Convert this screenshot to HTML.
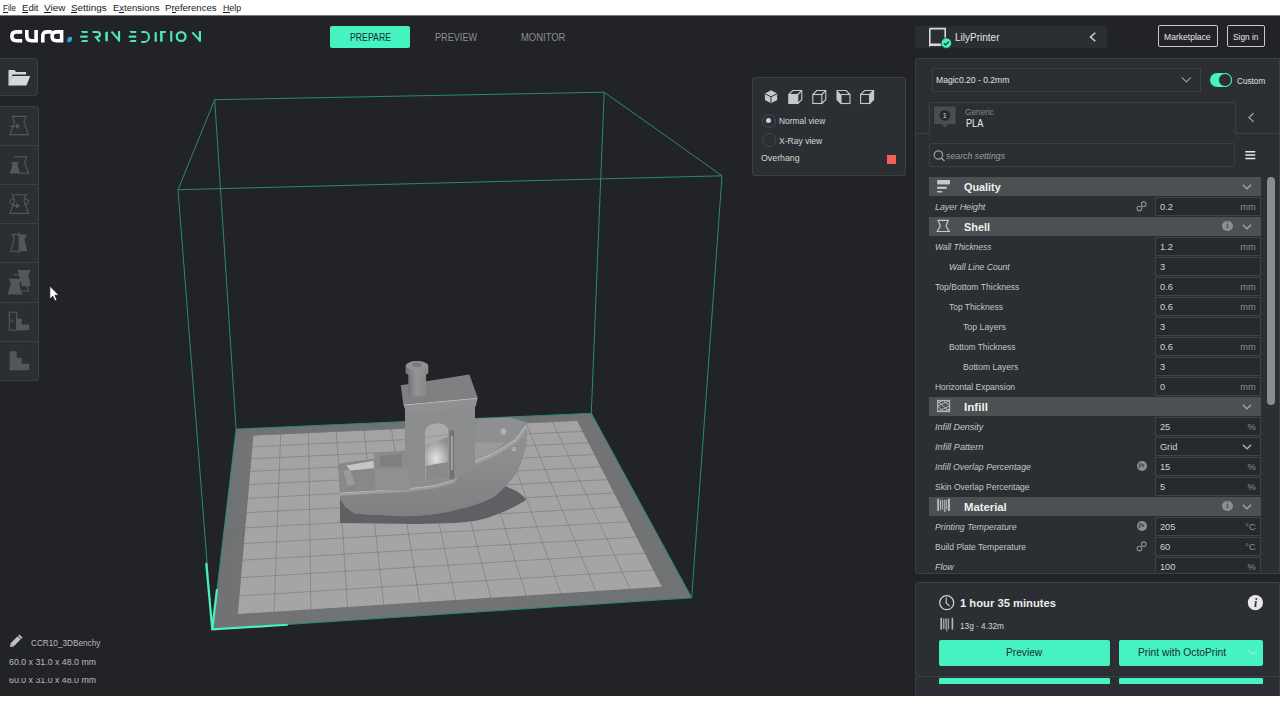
<!DOCTYPE html>
<html><head><meta charset="utf-8"><style>
html,body{margin:0;padding:0;width:1280px;height:720px;overflow:hidden;background:#222327;}
body{position:relative;font-family:"Liberation Sans",sans-serif;}
.t{position:absolute;white-space:pre;transform-origin:0 0;}
.r{position:absolute;}
</style></head><body>
<div class="r" style="left:0px;top:0px;width:1280px;height:15px;background:#ffffff;"></div>
<div class="t" style="left:2.50px;top:2px;font-size:9.60px;line-height:11px;color:#1a1a1a;transform:scaleX(0.8404);">File</div>
<div class="t" style="left:21.50px;top:2px;font-size:9.60px;line-height:11px;color:#1a1a1a;transform:scaleX(0.9974);">Edit</div>
<div class="t" style="left:44.00px;top:2px;font-size:9.60px;line-height:11px;color:#1a1a1a;transform:scaleX(1.0419);">View</div>
<div class="t" style="left:71.20px;top:2px;font-size:9.60px;line-height:11px;color:#1a1a1a;transform:scaleX(1.0320);">Settings</div>
<div class="t" style="left:112.70px;top:2px;font-size:9.60px;line-height:11px;color:#1a1a1a;transform:scaleX(0.9902);">Extensions</div>
<div class="t" style="left:165.00px;top:2px;font-size:9.60px;line-height:11px;color:#1a1a1a;transform:scaleX(0.9969);">Preferences</div>
<div class="t" style="left:222.50px;top:2px;font-size:9.60px;line-height:11px;color:#1a1a1a;transform:scaleX(0.9167);">Help</div>
<div class="r" style="left:2.5px;top:12px;width:5.5px;height:1px;background:#1a1a1a;"></div>
<div class="r" style="left:21.5px;top:12px;width:6.5px;height:1px;background:#1a1a1a;"></div>
<div class="r" style="left:44px;top:12px;width:7px;height:1px;background:#1a1a1a;"></div>
<div class="r" style="left:71.2px;top:12px;width:6.299999999999997px;height:1px;background:#1a1a1a;"></div>
<div class="r" style="left:119px;top:12px;width:5px;height:1px;background:#1a1a1a;"></div>
<div class="r" style="left:171.5px;top:12px;width:4.0px;height:1px;background:#1a1a1a;"></div>
<div class="r" style="left:222.5px;top:12px;width:7.0px;height:1px;background:#1a1a1a;"></div>
<div class="r" style="left:0px;top:15px;width:1280px;height:681px;background:#222327;"></div>
<div class="r" style="left:0px;top:15px;width:1280px;height:1px;background:#77787a;"></div>
<svg class="r" style="left:0;top:0" width="1280" height="720" viewBox="0 0 1280 720">
<polygon points="236.10,429.10 591.30,413.30 691.70,597.80 212.25,629.40" fill="#707173"/>
<polygon points="253.36,435.49 577.12,420.84 661.77,586.72 237.89,614.03" fill="#a8a8a9"/>
<path d="M250.42,428.46 L231.84,628.11 M235.41,434.86 L594.23,418.68 M253.21,428.34 L235.65,627.86 M235.28,435.99 L594.80,419.74 M255.99,428.22 L239.45,627.61 M235.14,437.13 L595.38,420.80 M258.77,428.09 L243.25,627.36 M235.01,438.28 L595.96,421.87 M261.54,427.97 L247.04,627.11 M234.87,439.43 L596.54,422.94 M264.32,427.84 L250.83,626.86 M234.73,440.58 L597.13,424.01 M267.09,427.72 L254.62,626.61 M234.60,441.74 L597.72,425.09 M269.87,427.60 L258.41,626.36 M234.46,442.90 L598.31,426.18 M272.64,427.47 L262.19,626.11 M234.32,444.07 L598.90,427.27 M275.41,427.35 L265.97,625.86 M234.18,445.24 L599.50,428.36 M278.18,427.23 L269.74,625.61 M234.04,446.42 L600.09,429.46 M280.94,427.11 L273.52,625.36 M233.90,447.60 L600.69,430.56 M283.71,426.98 L277.29,625.11 M233.76,448.79 L601.29,431.67 M286.47,426.86 L281.05,624.87 M233.61,449.98 L601.90,432.78 M289.23,426.74 L284.82,624.62 M233.47,451.18 L602.51,433.89 M291.99,426.61 L288.58,624.37 M233.33,452.39 L603.12,435.01 M294.75,426.49 L292.34,624.12 M233.18,453.59 L603.73,436.14 M297.50,426.37 L296.09,623.87 M233.04,454.81 L604.34,437.27 M300.26,426.25 L299.84,623.63 M232.89,456.02 L604.96,438.40 M303.01,426.12 L303.59,623.38 M232.75,457.25 L605.58,439.54 M305.76,426.00 L307.34,623.13 M232.60,458.48 L606.20,440.68 M308.51,425.88 L311.08,622.89 M232.46,459.71 L606.82,441.83 M311.26,425.76 L314.82,622.64 M232.31,460.95 L607.45,442.98 M314.01,425.63 L318.55,622.39 M232.16,462.19 L608.08,444.14 M316.75,425.51 L322.29,622.15 M232.01,463.44 L608.71,445.30 M319.49,425.39 L326.02,621.90 M231.86,464.70 L609.35,446.47 M322.24,425.27 L329.74,621.66 M231.71,465.96 L609.99,447.64 M324.98,425.15 L333.47,621.41 M231.56,467.23 L610.63,448.81 M327.71,425.02 L337.19,621.17 M231.41,468.50 L611.27,450.00 M330.45,424.90 L340.91,620.92 M231.26,469.77 L611.91,451.18 M333.19,424.78 L344.62,620.68 M231.10,471.06 L612.56,452.37 M335.92,424.66 L348.34,620.43 M230.95,472.34 L613.21,453.57 M338.65,424.54 L352.04,620.19 M230.80,473.64 L613.87,454.77 M341.38,424.42 L355.75,619.94 M230.64,474.94 L614.52,455.98 M344.11,424.30 L359.45,619.70 M230.49,476.24 L615.18,457.19 M346.84,424.17 L363.15,619.45 M230.33,477.55 L615.84,458.40 M349.56,424.05 L366.85,619.21 M230.17,478.87 L616.51,459.63 M352.28,423.93 L370.55,618.97 M230.02,480.19 L617.18,460.85 M355.01,423.81 L374.24,618.72 M229.86,481.52 L617.85,462.08 M357.73,423.69 L377.92,618.48 M229.70,482.86 L618.52,463.32 M360.45,423.57 L381.61,618.24 M229.54,484.20 L619.20,464.56 M363.16,423.45 L385.29,617.99 M229.38,485.54 L619.87,465.81 M365.88,423.33 L388.97,617.75 M229.22,486.89 L620.56,467.06 M368.59,423.21 L392.65,617.51 M229.06,488.25 L621.24,468.32 M371.30,423.09 L396.32,617.27 M228.89,489.62 L621.93,469.59 M374.01,422.97 L399.99,617.03 M228.73,490.99 L622.62,470.85 M376.72,422.84 L403.66,616.78 M228.57,492.36 L623.31,472.13 M379.43,422.72 L407.32,616.54 M228.40,493.75 L624.01,473.41 M382.14,422.60 L410.99,616.30 M228.24,495.14 L624.71,474.70 M384.84,422.48 L414.64,616.06 M228.07,496.53 L625.41,475.99 M387.54,422.36 L418.30,615.82 M227.90,497.93 L626.12,477.28 M390.24,422.24 L421.95,615.58 M227.74,499.34 L626.83,478.59 M392.94,422.12 L425.60,615.34 M227.57,500.76 L627.54,479.90 M395.64,422.00 L429.25,615.10 M227.40,502.18 L628.25,481.21 M398.34,421.88 L432.89,614.86 M227.23,503.61 L628.97,482.53 M401.03,421.76 L436.53,614.62 M227.06,505.04 L629.69,483.85 M403.73,421.64 L440.17,614.38 M226.89,506.48 L630.42,485.19 M406.42,421.52 L443.81,614.14 M226.71,507.93 L631.15,486.52 M409.11,421.40 L447.44,613.90 M226.54,509.38 L631.88,487.87 M411.80,421.28 L451.07,613.66 M226.37,510.84 L632.61,489.22 M414.48,421.17 L454.70,613.42 M226.19,512.31 L633.35,490.57 M417.17,421.05 L458.32,613.18 M226.02,513.79 L634.09,491.93 M419.85,420.93 L461.94,612.94 M225.84,515.27 L634.83,493.30 M422.53,420.81 L465.56,612.70 M225.66,516.76 L635.58,494.67 M425.21,420.69 L469.17,612.47 M225.48,518.25 L636.33,496.05 M427.89,420.57 L472.78,612.23 M225.31,519.76 L637.09,497.44 M430.57,420.45 L476.39,611.99 M225.13,521.27 L637.84,498.83 M433.24,420.33 L480.00,611.75 M224.95,522.78 L638.61,500.23 M435.92,420.21 L483.60,611.52 M224.76,524.31 L639.37,501.64 M438.59,420.09 L487.20,611.28 M224.58,525.84 L640.14,503.05 M441.26,419.97 L490.80,611.04 M224.40,527.38 L640.91,504.46 M443.93,419.86 L494.40,610.80 M224.21,528.92 L641.68,505.89 M446.60,419.74 L497.99,610.57 M224.03,530.48 L642.46,507.32 M449.26,419.62 L501.58,610.33 M223.84,532.04 L643.25,508.76 M451.93,419.50 L505.16,610.09 M223.66,533.61 L644.03,510.20 M454.59,419.38 L508.75,609.86 M223.47,535.18 L644.82,511.65 M457.25,419.26 L512.33,609.62 M223.28,536.76 L645.61,513.11 M459.91,419.14 L515.90,609.39 M223.09,538.36 L646.41,514.57 M462.57,419.03 L519.48,609.15 M222.90,539.95 L647.21,516.04 M465.23,418.91 L523.05,608.92 M222.71,541.56 L648.01,517.52 M467.88,418.79 L526.62,608.68 M222.52,543.18 L648.82,519.01 M470.54,418.67 L530.19,608.45 M222.32,544.80 L649.63,520.50 M473.19,418.55 L533.75,608.21 M222.13,546.43 L650.45,522.00 M475.84,418.44 L537.31,607.98 M221.93,548.07 L651.27,523.50 M478.49,418.32 L540.87,607.74 M221.74,549.71 L652.09,525.01 M481.14,418.20 L544.42,607.51 M221.54,551.37 L652.92,526.53 M483.78,418.08 L547.97,607.27 M221.34,553.03 L653.75,528.06 M486.43,417.96 L551.52,607.04 M221.14,554.70 L654.58,529.59 M489.07,417.85 L555.07,606.81 M220.94,556.38 L655.42,531.13 M491.71,417.73 L558.61,606.57 M220.74,558.07 L656.27,532.68 M494.35,417.61 L562.16,606.34 M220.54,559.77 L657.11,534.24 M496.99,417.50 L565.69,606.10 M220.34,561.47 L657.96,535.80 M499.63,417.38 L569.23,605.87 M220.13,563.19 L658.82,537.37 M502.26,417.26 L572.76,605.64 M219.93,564.91 L659.68,538.95 M504.89,417.14 L576.29,605.41 M219.72,566.64 L660.54,540.54 M507.53,417.03 L579.82,605.17 M219.52,568.38 L661.41,542.13 M510.16,416.91 L583.34,604.94 M219.31,570.13 L662.28,543.73 M512.79,416.79 L586.86,604.71 M219.10,571.88 L663.15,545.34 M515.41,416.68 L590.38,604.48 M218.89,573.65 L664.03,546.96 M518.04,416.56 L593.90,604.25 M218.68,575.43 L664.92,548.59 M520.66,416.44 L597.41,604.01 M218.46,577.21 L665.81,550.22 M523.29,416.33 L600.92,603.78 M218.25,579.00 L666.70,551.86 M525.91,416.21 L604.43,603.55 M218.04,580.81 L667.60,553.51 M528.53,416.09 L607.93,603.32 M217.82,582.62 L668.50,555.17 M531.14,415.98 L611.43,603.09 M217.60,584.44 L669.41,556.83 M533.76,415.86 L614.93,602.86 M217.39,586.27 L670.32,558.51 M536.38,415.74 L618.43,602.63 M217.17,588.11 L671.23,560.19 M538.99,415.63 L621.92,602.40 M216.95,589.96 L672.15,561.88 M541.60,415.51 L625.42,602.17 M216.72,591.82 L673.08,563.58 M544.21,415.39 L628.90,601.94 M216.50,593.69 L674.01,565.28 M546.82,415.28 L632.39,601.71 M216.28,595.57 L674.94,567.00 M549.43,415.16 L635.87,601.48 M216.05,597.46 L675.88,568.72 M552.04,415.05 L639.35,601.25 M215.83,599.36 L676.82,570.46 M554.64,414.93 L642.83,601.02 M215.60,601.27 L677.77,572.20 M557.24,414.81 L646.30,600.79 M215.37,603.19 L678.72,573.95 M559.84,414.70 L649.78,600.56 M215.14,605.12 L679.68,575.71 M562.44,414.58 L653.24,600.33 M214.91,607.06 L680.64,577.48 M565.04,414.47 L656.71,600.11 M214.68,609.01 L681.61,579.25 M567.64,414.35 L660.18,599.88 M214.44,610.98 L682.58,581.04 M570.24,414.24 L663.64,599.65 M214.21,612.95 L683.56,582.84 M572.83,414.12 L667.09,599.42 M213.97,614.93 L684.54,584.64 M575.42,414.01 L670.55,599.19 M213.74,616.92 L685.53,586.46 M578.01,413.89 L674.00,598.97 M213.50,618.93 L686.52,588.28 M580.60,413.78 L677.45,598.74 M213.26,620.94 L687.52,590.11 M583.19,413.66 L680.90,598.51 M213.02,622.97 L688.52,591.96 M585.78,413.55 L684.35,598.28 M212.77,625.01 L689.53,593.81 M588.36,413.43 L687.79,598.06 M212.53,627.06 L690.54,595.67 M590.94,413.32 L691.23,597.83 M212.28,629.12 L691.56,597.54" stroke="#909090" stroke-opacity="0.18" stroke-width="0.6" fill="none"/>
<path d="M253.21,428.34 L235.65,627.86 M235.28,435.99 L594.80,419.74 M280.94,427.11 L273.52,625.36 M233.90,447.60 L600.69,430.56 M308.51,425.88 L311.08,622.89 M232.46,459.71 L606.82,441.83 M335.92,424.66 L348.34,620.43 M230.95,472.34 L613.21,453.57 M363.16,423.45 L385.29,617.99 M229.38,485.54 L619.87,465.81 M390.24,422.24 L421.95,615.58 M227.74,499.34 L626.83,478.59 M417.17,421.05 L458.32,613.18 M226.02,513.79 L634.09,491.93 M443.93,419.86 L494.40,610.80 M224.21,528.92 L641.68,505.89 M470.54,418.67 L530.19,608.45 M222.32,544.80 L649.63,520.50 M496.99,417.50 L565.69,606.10 M220.34,561.47 L657.96,535.80 M523.29,416.33 L600.92,603.78 M218.25,579.00 L666.70,551.86 M549.43,415.16 L635.87,601.48 M216.05,597.46 L675.88,568.72 M575.42,414.01 L670.55,599.19 M213.74,616.92 L685.53,586.46" stroke="#737477" stroke-opacity="0.6" stroke-width="0.9" fill="none"/>
<path d="M214.7,99.7 L604.2,92.2 M604.2,92.2 L722,175.8 M722,175.8 L178,189.7 M178,189.7 L214.7,99.7 M214.7,99.7 L236.1,429.1 M604.2,92.2 L591.3,413.3 M722,175.8 L691.7,597.8 M178,189.7 L212.25,629.4 M236.1,429.1 L591.3,413.3 M591.3,413.3 L691.7,597.8 M691.7,597.8 L212.25,629.4 M212.25,629.4 L236.1,429.1" stroke="#2b8a70" stroke-width="1" fill="none"/>
<path d="M340,498 L340,523 L417.5,524 L455,523 C468,522 480,520.5 490,517 C505,512 518,505 526,500 C524,495 516,490 505,486 L492,484 Z" fill="#5f6063"/>
<defs>
<linearGradient id="hull" x1="0" y1="0" x2="0" y2="1"><stop offset="0" stop-color="#929394"/><stop offset="1" stop-color="#7f8081"/></linearGradient>
<linearGradient id="chim" x1="0" y1="0" x2="1" y2="0"><stop offset="0" stop-color="#727374"/><stop offset="0.45" stop-color="#939495"/><stop offset="1" stop-color="#888989"/></linearGradient>
<radialGradient id="win" cx="0.45" cy="0.75" r="0.7"><stop offset="0" stop-color="#e2e3e4"/><stop offset="1" stop-color="#909192"/></radialGradient>
</defs>
<path d="M338.8,463.8 L373.5,459 L405,452 L475,418.8 L510,417.5 L526.3,422.5 C527.5,432 527,440 526.3,445 C523,458 520,467 515,475 C506,486 500,492 492.5,497.5 C480,504 468,507 455,510 C440,514 420,516 405,516.3 L355,513.8 C346,508 340,502 340,495 Z" fill="#8a8b8c"/>
<path d="M475,418.8 L510,417.5 L526.3,422.5 L515,440 L492.5,453.8 L466.3,465 L475,460 Z" fill="#8e8f90"/>
<path d="M474,442.5 L505,442.5 L492.5,453.8 L466.3,465 L452.5,480 L440,482 L474,468 Z" fill="#999a9b"/>
<path d="M340,492.5 L405,488.8 L435,485 L452.5,480 C457,472 461,467 466.3,465 L492.5,453.8 L515,440 L526.3,425 C527.5,432 527,440 526.3,445 C523,458 520,467 515,475 C506,486 500,492 492.5,497.5 C480,504 468,507 455,510 C440,514 420,516 405,516.3 L355,513.8 C346,508 340,502 340,495 Z" fill="url(#hull)"/>
<path d="M340,494.3 L405,490.5 L435,486.8 L453.5,481.8 C458,473.5 462,468.5 467.3,466.8 L493.5,455.5 L516,441.8 L527,426.5" stroke="#9c9d9e" stroke-width="3" fill="none"/>
<path d="M340,492.8 L405,489 L435,485.3 L452.5,480.3 C457,472 461,467 466.3,465.3 L492.5,454 L515,440.3 L526.3,425" stroke="#b8b9ba" stroke-width="1.2" fill="none"/>
<circle cx="514" cy="449" r="3.2" fill="#a9aaab" stroke="#7b7c7d" stroke-width="0.8"/>
<ellipse cx="503.5" cy="431.5" rx="2.8" ry="3.3" fill="#b0b1b2"/>
<path d="M338.8,463.8 L373.5,459 L374,470 L376,490.5 L340,492.5 Z" fill="#87888a"/>
<path d="M346.5,465.5 L373.3,460.8 L374.2,468.3 L350,470.5 Z" fill="#c4c5c6"/>
<path d="M343.3,471 L350,469.5 L355,484 L348,486 Z" fill="#9a9b9c"/>
<path d="M374.2,453.2 L409.4,450 L409.4,468.6 L374.2,468.6 Z" fill="#8a8b8c"/>
<path d="M380,455.8 L401.7,454 L401.7,466.7 L380,466.7 Z" fill="#7e7f80"/>
<path d="M374.2,468.6 L409.4,468.6 L410,490 L375.5,490.3 Z" fill="#8f9091"/>
<path d="M405,407.5 L475,403.8 L475,467.5 L452.5,480 L435,485 L409.4,488 L409.4,450 L405,450 Z" fill="#8c8d8e"/>
<path d="M425,480 L425,431 C427,422 446,420 448.2,430 L448.2,478 Z" fill="#a9aaab"/>
<path d="M425,437.5 L448.2,434.5 M425,445.5 L448.2,442.5" stroke="#8f9092" stroke-width="0.7" fill="none"/>
<path d="M425.7,446.2 L446.9,437 L448.2,437 L448.2,462 L425.7,466 Z" fill="url(#win)"/>
<path d="M425.7,466 L448.2,462 L448.2,478 L425.7,480 Z" fill="#898a8b"/>
<path d="M449.6,430.4 L454.1,430.4 L454.1,479.2 L449.6,479.2 Z" fill="#727374"/>
<path d="M451.2,436 L452.6,436 L452.6,470 L451.2,470 Z" fill="#b5b6b7"/>
<path d="M400.75,385.3 L469.4,374.4 L477.8,397.8 L403.3,404.4 Z" fill="#7f8081"/>
<path d="M403.3,404.4 L477.8,397.8 L475.6,406.7 L406.7,413.9 Z" fill="#8f9091"/>
<path d="M404,405 L477,398.3" stroke="#b8b9ba" stroke-width="1" fill="none"/>
<path d="M408.3,370 L426.1,370 L426.1,394.5 C420,396.5 414,396.5 408.3,394.5 Z" fill="url(#chim)"/>
<path d="M405.6,365.5 L428.3,365.5 L428.3,373.5 C422,376.5 412,376.5 405.6,373.5 Z" fill="url(#chim)"/>
<ellipse cx="417" cy="365.6" rx="11.3" ry="4.5" fill="#909192"/>
<ellipse cx="417" cy="364.8" rx="5" ry="2.3" fill="#797a7b"/>
<path d="M206.3,563.8 L212.25,629.4 L286.9,624.75 M212.25,629.4 L216.9,590" stroke="#4af0c0" stroke-width="2.2" fill="none" stroke-linecap="round"/>
</svg>
<div class="r" style="left:330px;top:25.5px;width:80px;height:22.5px;background:#45f3c1;border-radius:2px;"></div>
<div class="t" style="left:350.00px;top:31px;font-size:10.50px;line-height:12px;color:#1d2b2f;transform:scaleX(0.8299);">PREPARE</div>
<div class="t" style="left:434.75px;top:31px;font-size:10.50px;line-height:12px;color:#8b8e92;transform:scaleX(0.8694);">PREVIEW</div>
<div class="t" style="left:520.60px;top:31px;font-size:10.50px;line-height:12px;color:#8b8e92;transform:scaleX(0.8990);">MONITOR</div>
<div class="r" style="left:915px;top:26px;width:192px;height:22px;background:#2b2f33;border-radius:3px;"></div>
<div class="t" style="left:955.30px;top:31px;font-size:10.50px;line-height:12px;color:#e6e6e6;transform:scaleX(0.9532);">LilyPrinter</div>
<div class="r" style="left:1158px;top:25px;width:60px;height:22px;border:1px solid #c8c8c8;box-sizing:border-box;border-radius:2px;"></div>
<div class="t" style="left:1164.20px;top:32px;font-size:9.20px;line-height:10px;color:#e6e6e6;transform:scaleX(0.9319);">Marketplace</div>
<div class="r" style="left:1227px;top:25px;width:38px;height:22px;border:1px solid #c8c8c8;box-sizing:border-box;border-radius:2px;"></div>
<div class="t" style="left:1232.80px;top:32px;font-size:9.20px;line-height:10px;color:#e6e6e6;transform:scaleX(0.9029);">Sign in</div>
<div class="r" style="left:915px;top:58px;width:365px;height:516px;background:#2b2e32;border:1px solid #3c3f43;box-sizing:border-box;border-radius:3px 0 0 3px;"></div>
<div class="r" style="left:932px;top:68px;width:269px;height:24px;background:#2b2e32;border:1px solid #3c3f43;box-sizing:border-box;border-radius:1px;"></div>
<div class="t" style="left:935.80px;top:75px;font-size:9.20px;line-height:10px;color:#e0e0e0;transform:scaleX(0.9334);">Magic0.20 - 0.2mm</div>
<div class="r" style="left:1210px;top:72.8px;width:22px;height:14.3px;background:#45f3c1;border-radius:7.15px;"></div>
<div class="r" style="left:1218.2px;top:72.9px;width:14px;height:14px;border-radius:50%;background:#2b2e32;box-sizing:border-box;border:1.1px solid #45f3c1"></div>
<div class="t" style="left:1236.70px;top:76px;font-size:9.20px;line-height:10px;color:#e0e0e0;transform:scaleX(0.8928);">Custom</div>
<div class="r" style="left:929px;top:102px;width:307px;height:32px;border:1px solid #3c3f43;border-bottom:none;box-sizing:border-box;border-radius:3px 3px 0 0"></div>
<div class="r" style="left:915px;top:133px;width:15px;height:1px;background:#3c3f43;"></div>
<div class="r" style="left:1235px;top:133px;width:45px;height:1px;background:#3c3f43;"></div>
<div class="t" style="left:965.00px;top:107px;font-size:8.50px;line-height:10px;color:#85888b;transform:scaleX(0.9744);">Generic</div>
<div class="t" style="left:965.50px;top:118px;font-size:10.20px;line-height:11px;color:#ececec;transform:scaleX(0.8973);">PLA</div>
<div class="r" style="left:929px;top:143px;width:306px;height:24px;background:#2b2e32;border:1px solid #3c3f43;box-sizing:border-box;border-radius:2px;"></div>
<div class="t" style="left:946.40px;top:150px;font-size:9.40px;line-height:11px;color:#9a9da0;transform:scaleX(0.9364);font-style:italic;">search settings</div>
<div class="r" style="left:915px;top:170px;width:364px;height:401.5px;overflow:hidden">
<div class="r" style="left:14px;top:7px;width:332px;height:19px;background:#4b5052;"></div>
<div class="t" style="left:49.00px;top:11px;font-size:10.80px;line-height:12px;color:#f0f0f0;transform:scaleX(1.0025);font-weight:bold;">Quality</div>
<svg class="r" style="left:327px;top:14px" width="10" height="6" viewBox="0 0 10 6"><path d="M0.8 0.8 L5 4.8 L9.2 0.8" fill="none" stroke="#a3a6a9" stroke-width="1.35"/></svg>
<div class="t" style="left:20.40px;top:32px;font-size:9.30px;line-height:10px;color:#c6c6c6;transform:scaleX(0.9539);font-style:italic;">Layer Height</div>
<div class="r" style="left:240px;top:27px;width:106px;height:19px;background:#26292d;border:1px solid #404347;box-sizing:border-box;border-radius:1px;"></div>
<div class="t" style="left:244.90px;top:32px;font-size:9.30px;line-height:10px;color:#d2d2d2;">0.2</div>
<div class="t" style="left:325.21px;top:32px;font-size:9.30px;line-height:10px;color:#8e9194;">mm</div>
<svg class="r" style="left:220px;top:31px" width="12" height="12" viewBox="0 0 12 12"><circle cx="4.4" cy="7.6" r="2.3" fill="none" stroke="#8c8c8c" stroke-width="1.1"/><circle cx="8.75" cy="3.2" r="2.3" fill="none" stroke="#8c8c8c" stroke-width="1.1"/></svg>
<div class="r" style="left:14px;top:47px;width:332px;height:19px;background:#4b5052;"></div>
<div class="t" style="left:49.00px;top:51px;font-size:10.80px;line-height:12px;color:#f0f0f0;transform:scaleX(1.0074);font-weight:bold;">Shell</div>
<svg class="r" style="left:327px;top:54px" width="10" height="6" viewBox="0 0 10 6"><path d="M0.8 0.8 L5 4.8 L9.2 0.8" fill="none" stroke="#a3a6a9" stroke-width="1.35"/></svg>
<div class="r" style="left:307.2px;top:51px;width:10.4px;height:10.4px;border-radius:50%;background:#8c8f92;color:#4b5052;font:bold 8px/10.4px 'Liberation Serif',serif;text-align:center">i</div>
<div class="t" style="left:20.40px;top:72px;font-size:9.30px;line-height:10px;color:#c6c6c6;transform:scaleX(0.9044);font-style:italic;">Wall Thickness</div>
<div class="r" style="left:240px;top:67px;width:106px;height:19px;background:#26292d;border:1px solid #404347;box-sizing:border-box;border-radius:1px;"></div>
<div class="t" style="left:244.90px;top:72px;font-size:9.30px;line-height:10px;color:#d2d2d2;">1.2</div>
<div class="t" style="left:325.21px;top:72px;font-size:9.30px;line-height:10px;color:#8e9194;">mm</div>
<div class="t" style="left:34.00px;top:92px;font-size:9.30px;line-height:10px;color:#c6c6c6;transform:scaleX(0.9270);font-style:italic;">Wall Line Count</div>
<div class="r" style="left:240px;top:87px;width:106px;height:19px;background:#26292d;border:1px solid #404347;box-sizing:border-box;border-radius:1px;"></div>
<div class="t" style="left:244.90px;top:92px;font-size:9.30px;line-height:10px;color:#d2d2d2;">3</div>
<div class="t" style="left:20.40px;top:112px;font-size:9.30px;line-height:10px;color:#c6c6c6;transform:scaleX(0.9242);">Top/Bottom Thickness</div>
<div class="r" style="left:240px;top:107px;width:106px;height:19px;background:#26292d;border:1px solid #404347;box-sizing:border-box;border-radius:1px;"></div>
<div class="t" style="left:244.90px;top:112px;font-size:9.30px;line-height:10px;color:#d2d2d2;">0.6</div>
<div class="t" style="left:325.21px;top:112px;font-size:9.30px;line-height:10px;color:#8e9194;">mm</div>
<div class="t" style="left:34.00px;top:132px;font-size:9.30px;line-height:10px;color:#c6c6c6;transform:scaleX(0.9110);">Top Thickness</div>
<div class="r" style="left:240px;top:127px;width:106px;height:19px;background:#26292d;border:1px solid #404347;box-sizing:border-box;border-radius:1px;"></div>
<div class="t" style="left:244.90px;top:132px;font-size:9.30px;line-height:10px;color:#d2d2d2;">0.6</div>
<div class="t" style="left:325.21px;top:132px;font-size:9.30px;line-height:10px;color:#8e9194;">mm</div>
<div class="t" style="left:47.60px;top:152px;font-size:9.30px;line-height:10px;color:#c6c6c6;transform:scaleX(0.9408);">Top Layers</div>
<div class="r" style="left:240px;top:147px;width:106px;height:19px;background:#26292d;border:1px solid #404347;box-sizing:border-box;border-radius:1px;"></div>
<div class="t" style="left:244.90px;top:152px;font-size:9.30px;line-height:10px;color:#d2d2d2;">3</div>
<div class="t" style="left:34.00px;top:172px;font-size:9.30px;line-height:10px;color:#c6c6c6;transform:scaleX(0.9018);">Bottom Thickness</div>
<div class="r" style="left:240px;top:167px;width:106px;height:19px;background:#26292d;border:1px solid #404347;box-sizing:border-box;border-radius:1px;"></div>
<div class="t" style="left:244.90px;top:172px;font-size:9.30px;line-height:10px;color:#d2d2d2;">0.6</div>
<div class="t" style="left:325.21px;top:172px;font-size:9.30px;line-height:10px;color:#8e9194;">mm</div>
<div class="t" style="left:47.60px;top:192px;font-size:9.30px;line-height:10px;color:#c6c6c6;transform:scaleX(0.9206);">Bottom Layers</div>
<div class="r" style="left:240px;top:187px;width:106px;height:19px;background:#26292d;border:1px solid #404347;box-sizing:border-box;border-radius:1px;"></div>
<div class="t" style="left:244.90px;top:192px;font-size:9.30px;line-height:10px;color:#d2d2d2;">3</div>
<div class="t" style="left:20.40px;top:212px;font-size:9.30px;line-height:10px;color:#c6c6c6;transform:scaleX(0.9114);">Horizontal Expansion</div>
<div class="r" style="left:240px;top:207px;width:106px;height:19px;background:#26292d;border:1px solid #404347;box-sizing:border-box;border-radius:1px;"></div>
<div class="t" style="left:244.90px;top:212px;font-size:9.30px;line-height:10px;color:#d2d2d2;">0</div>
<div class="t" style="left:325.21px;top:212px;font-size:9.30px;line-height:10px;color:#8e9194;">mm</div>
<div class="r" style="left:14px;top:227px;width:332px;height:19px;background:#4b5052;"></div>
<div class="t" style="left:49.00px;top:231px;font-size:10.80px;line-height:12px;color:#f0f0f0;transform:scaleX(1.0813);font-weight:bold;">Infill</div>
<svg class="r" style="left:327px;top:234px" width="10" height="6" viewBox="0 0 10 6"><path d="M0.8 0.8 L5 4.8 L9.2 0.8" fill="none" stroke="#a3a6a9" stroke-width="1.35"/></svg>
<div class="t" style="left:20.40px;top:252px;font-size:9.30px;line-height:10px;color:#c6c6c6;transform:scaleX(0.9634);font-style:italic;">Infill Density</div>
<div class="r" style="left:240px;top:247px;width:106px;height:19px;background:#26292d;border:1px solid #404347;box-sizing:border-box;border-radius:1px;"></div>
<div class="t" style="left:244.90px;top:252px;font-size:9.30px;line-height:10px;color:#d2d2d2;">25</div>
<div class="t" style="left:332.43px;top:252px;font-size:9.30px;line-height:10px;color:#8e9194;">%</div>
<div class="t" style="left:20.40px;top:272px;font-size:9.30px;line-height:10px;color:#c6c6c6;transform:scaleX(0.9836);font-style:italic;">Infill Pattern</div>
<div class="r" style="left:240px;top:267px;width:106px;height:19px;background:#26292d;border:1px solid #404347;box-sizing:border-box;border-radius:1px;"></div>
<div class="t" style="left:244.90px;top:272px;font-size:9.30px;line-height:10px;color:#d2d2d2;">Grid</div>
<svg class="r" style="left:327px;top:274px" width="10" height="6" viewBox="0 0 10 6"><path d="M0.8 0.8 L5 4.8 L9.2 0.8" fill="none" stroke="#b0b3b6" stroke-width="1.35"/></svg>
<div class="t" style="left:20.40px;top:292px;font-size:9.30px;line-height:10px;color:#c6c6c6;transform:scaleX(0.9427);font-style:italic;">Infill Overlap Percentage</div>
<div class="r" style="left:240px;top:287px;width:106px;height:19px;background:#26292d;border:1px solid #404347;box-sizing:border-box;border-radius:1px;"></div>
<div class="t" style="left:244.90px;top:292px;font-size:9.30px;line-height:10px;color:#d2d2d2;">15</div>
<div class="t" style="left:332.43px;top:292px;font-size:9.30px;line-height:10px;color:#8e9194;">%</div>
<div class="r" style="left:221.8px;top:291.2px;width:9.8px;height:9.8px;border-radius:50%;background:#8c8c8c;color:#2b2e32;font:italic bold 7px/9.8px 'Liberation Serif',serif;text-align:center">fx</div>
<div class="t" style="left:20.40px;top:312px;font-size:9.30px;line-height:10px;color:#c6c6c6;transform:scaleX(0.9150);">Skin Overlap Percentage</div>
<div class="r" style="left:240px;top:307px;width:106px;height:19px;background:#26292d;border:1px solid #404347;box-sizing:border-box;border-radius:1px;"></div>
<div class="t" style="left:244.90px;top:312px;font-size:9.30px;line-height:10px;color:#d2d2d2;">5</div>
<div class="t" style="left:332.43px;top:312px;font-size:9.30px;line-height:10px;color:#8e9194;">%</div>
<div class="r" style="left:14px;top:327px;width:332px;height:19px;background:#4b5052;"></div>
<div class="t" style="left:49.00px;top:331px;font-size:10.80px;line-height:12px;color:#f0f0f0;transform:scaleX(1.0461);font-weight:bold;">Material</div>
<svg class="r" style="left:327px;top:334px" width="10" height="6" viewBox="0 0 10 6"><path d="M0.8 0.8 L5 4.8 L9.2 0.8" fill="none" stroke="#a3a6a9" stroke-width="1.35"/></svg>
<div class="r" style="left:307.2px;top:331px;width:10.4px;height:10.4px;border-radius:50%;background:#8c8f92;color:#4b5052;font:bold 8px/10.4px 'Liberation Serif',serif;text-align:center">i</div>
<div class="t" style="left:20.40px;top:352px;font-size:9.30px;line-height:10px;color:#c6c6c6;transform:scaleX(0.9433);font-style:italic;">Printing Temperature</div>
<div class="r" style="left:240px;top:347px;width:106px;height:19px;background:#26292d;border:1px solid #404347;box-sizing:border-box;border-radius:1px;"></div>
<div class="t" style="left:244.90px;top:352px;font-size:9.30px;line-height:10px;color:#d2d2d2;">205</div>
<div class="t" style="left:330.26px;top:352px;font-size:9.30px;line-height:10px;color:#8e9194;">°C</div>
<div class="r" style="left:221.8px;top:351.2px;width:9.8px;height:9.8px;border-radius:50%;background:#8c8c8c;color:#2b2e32;font:italic bold 7px/9.8px 'Liberation Serif',serif;text-align:center">fx</div>
<div class="t" style="left:20.40px;top:372px;font-size:9.30px;line-height:10px;color:#c6c6c6;transform:scaleX(0.9194);">Build Plate Temperature</div>
<div class="r" style="left:240px;top:367px;width:106px;height:19px;background:#26292d;border:1px solid #404347;box-sizing:border-box;border-radius:1px;"></div>
<div class="t" style="left:244.90px;top:372px;font-size:9.30px;line-height:10px;color:#d2d2d2;">60</div>
<div class="t" style="left:330.26px;top:372px;font-size:9.30px;line-height:10px;color:#8e9194;">°C</div>
<svg class="r" style="left:220px;top:371px" width="12" height="12" viewBox="0 0 12 12"><circle cx="4.4" cy="7.6" r="2.3" fill="none" stroke="#8c8c8c" stroke-width="1.1"/><circle cx="8.75" cy="3.2" r="2.3" fill="none" stroke="#8c8c8c" stroke-width="1.1"/></svg>
<div class="t" style="left:20.40px;top:392px;font-size:9.30px;line-height:10px;color:#c6c6c6;transform:scaleX(0.9574);font-style:italic;">Flow</div>
<div class="r" style="left:240px;top:387px;width:106px;height:19px;background:#26292d;border:1px solid #404347;box-sizing:border-box;border-radius:1px;"></div>
<div class="t" style="left:244.90px;top:392px;font-size:9.30px;line-height:10px;color:#d2d2d2;">100</div>
<div class="t" style="left:332.43px;top:392px;font-size:9.30px;line-height:10px;color:#8e9194;">%</div>
</div>
<div class="r" style="left:1267px;top:177px;width:7.5px;height:228px;background:#8a8c8e;border-radius:4px;"></div>
<div class="r" style="left:915px;top:582px;width:365px;height:95px;background:#2b2e32;border:1px solid #3c3f43;box-sizing:border-box;border-radius:3px 0 0 3px;"></div>
<div class="r" style="left:915px;top:676px;width:365px;height:40px;background:#2b2e32;border:1px solid #3c3f43;box-sizing:border-box;border-radius:3px;"></div>
<div class="t" style="left:960.20px;top:597px;font-size:11.00px;line-height:12px;color:#ececec;transform:scaleX(1.0198);font-weight:bold;">1 hour 35 minutes</div>
<div class="t" style="left:960.20px;top:621px;font-size:8.80px;line-height:10px;color:#d8d8d8;transform:scaleX(0.9369);">13g · 4.32m</div>
<div class="r" style="left:939px;top:640px;width:171px;height:25.5px;background:#45f3c1;border-radius:2px;"></div>
<div class="t" style="left:1006.30px;top:646px;font-size:10.60px;line-height:12px;color:#1d2b2f;transform:scaleX(0.9602);">Preview</div>
<div class="r" style="left:1119px;top:640px;width:144px;height:25.5px;background:#45f3c1;border-radius:2px;"></div>
<div class="t" style="left:1137.50px;top:646px;font-size:10.60px;line-height:12px;color:#1d2b2f;transform:scaleX(0.9722);">Print with OctoPrint</div>
<div class="r" style="left:939px;top:678px;width:171px;height:6px;background:#45f3c1;border-radius:1px;"></div>
<div class="r" style="left:1119px;top:678px;width:144px;height:6px;background:#45f3c1;border-radius:1px;"></div>
<div class="r" style="left:0px;top:696px;width:1280px;height:24px;background:#ffffff;"></div>
<div class="r" style="left:752px;top:77px;width:154px;height:99px;background:#2b2e32;border:1px solid #3c3f43;box-sizing:border-box;border-radius:3px;"></div>
<div class="t" style="left:778.70px;top:116px;font-size:9.20px;line-height:10px;color:#d8d8d8;transform:scaleX(0.9148);">Normal view</div>
<div class="t" style="left:778.70px;top:136px;font-size:9.20px;line-height:10px;color:#d8d8d8;transform:scaleX(0.9307);">X-Ray view</div>
<div class="t" style="left:760.80px;top:153px;font-size:9.20px;line-height:10px;color:#d8d8d8;transform:scaleX(0.9578);">Overhang</div>
<div class="r" style="left:887px;top:155px;width:8.5px;height:8.5px;background:#f26158;"></div>
<div class="r" style="left:761.7px;top:113.5px;width:14px;height:14px;border-radius:50%;border:1px solid #44474b;box-sizing:border-box"></div>
<div class="r" style="left:766.2px;top:118px;width:5px;height:5px;border-radius:50%;background:#d0d0d0"></div>
<div class="r" style="left:761.7px;top:133px;width:14px;height:14px;border-radius:50%;border:1px solid #44474b;box-sizing:border-box"></div>
<div class="r" style="left:-4px;top:58px;width:42px;height:38px;background:#2b2e32;border:1px solid #3c3f43;box-sizing:border-box;border-radius:3px;"></div>
<div class="r" style="left:-4px;top:105.5px;width:43px;height:275px;background:#2b2e32;border:1px solid #3c3f43;box-sizing:border-box;border-radius:3px;"></div>
<div class="r" style="left:0px;top:144.7px;width:38px;height:1px;background:#3c3f43;"></div>
<div class="r" style="left:0px;top:183.9px;width:38px;height:1px;background:#3c3f43;"></div>
<div class="r" style="left:0px;top:223.10000000000002px;width:38px;height:1px;background:#3c3f43;"></div>
<div class="r" style="left:0px;top:262.3px;width:38px;height:1px;background:#3c3f43;"></div>
<div class="r" style="left:0px;top:301.5px;width:38px;height:1px;background:#3c3f43;"></div>
<div class="r" style="left:0px;top:340.70000000000005px;width:38px;height:1px;background:#3c3f43;"></div>
<div class="t" style="left:30.50px;top:638px;font-size:9.20px;line-height:10px;color:#bcbcbc;transform:scaleX(0.8941);">CCR10_3DBenchy</div>
<div class="t" style="left:9.00px;top:657px;font-size:9.20px;line-height:10px;color:#bcbcbc;transform:scaleX(0.9580);">60.0 x 31.0 x 48.0 mm</div>
<div class="t" style="left:9.00px;top:675px;font-size:9.20px;line-height:10px;color:#bcbcbc;transform:scaleX(0.9580);">60.0 x 31.0 x 48.0 mm</div>
<div class="r" style="left:0px;top:675px;width:120px;height:3px;background:#222327;"></div>
<svg class="r" style="left:0;top:0" width="1280" height="720" viewBox="0 0 1280 720">
<g fill="none" stroke="#ffffff" stroke-width="3.6"><path d="M22.2,31.9 H16.2 C13.2,31.9 11.9,33.6 11.9,36.3 C11.9,39 13.2,40.7 16.2,40.7 H22.2"/><path d="M26.8,30.1 V35.8 C26.8,39 28.3,40.7 31.3,40.7 H36.1 V30.1"/><path d="M42.8,42.5 V36 C42.8,33.2 44.2,31.9 47.2,31.9 H51.8"/><path d="M61.6,42.5 V31.9 H56.4 C53.4,31.9 52.1,33.6 52.1,36.3 C52.1,39 53.4,40.7 56.4,40.7 H61.6"/></g>
<rect x="67.6" y="36.8" width="4.6" height="5.4" rx="2" fill="#29a5e3" transform="skewX(-14) translate(9.6,0)"/>
<g fill="#4ce6bd"><path d="M80.8,31.1 H87.7 V33 H82.4 Z"/><rect x="80.2" y="35.6" width="7.5" height="2.1"/><path d="M82.4,39.9 H87.7 V42 H80.8 Z"/><path d="M129.29999999999998,31.1 H136.2 V33 H130.89999999999998 Z"/><rect x="128.7" y="35.6" width="7.5" height="2.1"/><path d="M130.89999999999998,39.9 H136.2 V42 H129.29999999999998 Z"/><path d="M105.3,32.2 L107.9,31.6 V41.3 H105.3 Z"/><path d="M154.6,32.4 L156.8,31.7 V41.7 H154.6 Z"/><rect x="160.1" y="31" width="5.8" height="1.9"/><rect x="160.1" y="31" width="2.5" height="10.7"/><rect x="170.2" y="31" width="2.1" height="10.7"/><rect x="118" y="31" width="2.1" height="10.7"/><rect x="198.8" y="31" width="2.2" height="10.7"/></g>
<g fill="none" stroke="#4ce6bd" stroke-width="2.1"><path d="M92.5,32.05 H97.3 C99.3,32.05 100,33.4 100,34.6 C100,36 99,37 96.8,37.1 L96,37.3 L99.6,41.6"/><path d="M111.5,31.6 L119.2,40.2"/><path d="M192.3,32.4 L200,40.6"/><path d="M141.3,32 H144.6 A4.4,4.95 0 0 1 144.6,41.9 H141.3" stroke-width="2"/><ellipse cx="181.15" cy="36.5" rx="4.4" ry="4.45" stroke-width="2.2"/></g>
<path d="M929.8,28.6 H945.2 V45 M929.8,28.6 V45.6 L931.5,44.6 H942" fill="none" stroke="#d8d8d8" stroke-width="1.6"/>
<rect x="929" y="43.6" width="13" height="2.4" fill="#d8d8d8"/>
<circle cx="946.3" cy="43.1" r="5.2" fill="#45f3c1" stroke="#2b2f33" stroke-width="0.8"/>
<path d="M943.9,43.2 L945.7,44.9 L948.8,41.6" fill="none" stroke="#1f2b2e" stroke-width="1.3"/>
<path d="M1095.3,32.8 L1090.5,37 L1095.3,41.3" fill="none" stroke="#d8d8d8" stroke-width="1.4"/>
<path d="M1181.8,77.4 L1186.3,81.9 L1190.8,77.4" fill="none" stroke="#9a9da0" stroke-width="1.2"/>
<path d="M1253.6,113.3 L1249,117.6 L1253.6,121.9" fill="none" stroke="#a0a3a6" stroke-width="1.3"/>
<path d="M934.2,106.4 H955.6 V123.9 H948 L944.8,127.8 L941.6,123.9 H934.2 Z" fill="#4a4d52"/>
<circle cx="944.8" cy="115.3" r="5.4" fill="#25282c"/>
<text x="944.8" y="118.3" font-family="Liberation Sans" font-size="8" fill="#c8c8c8" text-anchor="middle">1</text>
<circle cx="938.4" cy="155" r="4.2" fill="none" stroke="#9a9da0" stroke-width="1.2"/>
<path d="M941.3,158 L944.5,161" stroke="#9a9da0" stroke-width="1.4"/>
<path d="M1245.3,151.8 H1255.3 M1245.3,155.1 H1255.3 M1245.3,158.4 H1255.3" stroke="#e6e6e6" stroke-width="1.5"/>
<g fill="#c8c8c8"><rect x="937.2" y="180" width="12.8" height="4.4"/><rect x="937.2" y="186.7" width="9.5" height="2.2"/><rect x="937.2" y="191" width="5" height="1.5"/></g>
<path d="M938.2,220.4 H948.2 L946,226 L949.2,231.5 H937.2 L940.3,226 Z" fill="none" stroke="#c8c8c8" stroke-width="1.2"/>
<g><rect x="937.6" y="400.4" width="12" height="11.2" fill="none" stroke="#b8b8b8" stroke-width="1.1"/><path d="M937.6,403 L943.6,400.4 M937.6,406 L949.6,400.8 M937.6,411.6 L949.6,406 M943,411.6 L949.6,409 M937.6,401 L949.6,411.6 M943,400.4 L949.6,405.5 M937.6,406 L944,411.6" stroke="#b8b8b8" stroke-width="1"/></g>
<g fill="#b8b8b8"><rect x="937.2" y="498.8" width="1.9" height="12.2"/><rect x="940" y="499.9" width="1.2" height="9.8"/><rect x="942.2" y="499.9" width="1" height="9.8"/><rect x="944.2" y="499.9" width="1.2" height="12.2"/><rect x="946.2" y="499.9" width="1" height="9.8"/><rect x="948" y="498.8" width="2" height="12.2"/></g>
<circle cx="946.7" cy="602.7" r="7" fill="none" stroke="#d0d0d0" stroke-width="1.2"/>
<path d="M946.2,597.5 V602.9 L949.5,606.2" fill="none" stroke="#d0d0d0" stroke-width="1.1"/>
<g fill="#b8b8b8"><rect x="940.4" y="617.8" width="1.6" height="11.8"/><rect x="942.9" y="618.5" width="0.9" height="10.6"/><rect x="944.6" y="618.5" width="0.9" height="10.6"/><rect x="946.3" y="618.5" width="1" height="12.8"/><rect x="948.2" y="618.5" width="0.9" height="10.6"/><rect x="951.6" y="617.8" width="1.6" height="11.8"/></g>
<circle cx="1255.4" cy="602.7" r="7.6" fill="#e8e8e8"/>
<text x="1255.6" y="607.3" font-family="Liberation Serif" font-weight="bold" font-style="italic" font-size="11.5" fill="#2b2e32" text-anchor="middle">i</text>
<path d="M1248.5,650.3 L1252.8,654.4 L1257.1,650.3" fill="none" stroke="#8fe9cf" stroke-width="1.3"/>
<g transform="translate(16,641) rotate(-45)"><rect x="-5.5" y="-2.2" width="10" height="4.4" fill="#c0c0c0"/><path d="M-5.5,-2.2 L-8.5,0 L-5.5,2.2 Z" fill="#c0c0c0"/><rect x="5.2" y="-2.2" width="1.8" height="4.4" fill="#c0c0c0"/></g>
<path d="M49.8,286 L49.8,299 L52.8,296.2 L55,301 L57,300.1 L54.9,295.3 L58.9,295.3 Z" fill="#ffffff" stroke="#1a1a1a" stroke-width="0.8"/>
<path d="M8.5,70 H14.5 L16,72 H26 V74.5 H12.5 L8.5,85.5 Z" fill="#d8d8d8"/>
<path d="M12,76 H30.2 L26.5,85.6 H8.3 Z" fill="#d8d8d8"/>
<g fill="none" stroke="#53575b" stroke-width="1.15" stroke-linejoin="miter"><path d="M12.4,116.4 H26 L23.8,122.2 L28.5,134.6 H10 L14.6,122.2 Z"/><path d="M9.6,126.3 H16.5"/><path d="M14,156.8 H26.6 L24.6,162.2 L28.4,173.2 H19.5"/><path d="M12.4,194.7 H26 L23.8,200 L28.5,213.4 H10 L14.6,200 Z"/><path d="M14.2,199 C8.6,199 8.6,204.6 14.2,204.6 M24.2,199 C29.8,199 29.8,204.6 24.2,204.6 M12.5,205.7 H16.5"/><path d="M19.1,234.6 H12.4 L14.2,239.5 L10.8,251.2 H19.1"/><path d="M19.1,232.6 V253.2"/><path d="M13.6,274.8 H27.3 L25.3,280 L28.4,291.2 H19"/><rect x="9.4" y="312.2" width="7.2" height="18"/><path d="M11,319.4 L14,322.4 M14,319.4 L11,322.4" stroke-width="0.9"/></g>
<g fill="#53575b"><path d="M16,123.6 L20.4,126.3 L16,129 Z"/><path d="M15.8,203 L20.2,205.7 L15.8,208.4 Z"/><path d="M11.3,162 H18.7 L17.6,165 L20.2,173.4 H9.8 L12.4,165 Z"/><path d="M19.1,234.6 H27 L24.4,239.5 L27.4,251.2 H19.1 Z"/><path d="M17.6,270 H30.6 L28.4,275.5 L30.8,286.2 H22 Z"/><path d="M8.6,278.7 H21.4 L19.2,284 L22.4,294.5 H7.6 L10.8,284 Z"/><path d="M16.6,318.7 H21.7 V324.5 H29.2 V330.3 H16.6 Z"/><path d="M9.7,351.2 H16.7 V357.8 H21.7 V363.7 H29.2 V370.3 H9.7 Z"/></g>
<path d="M771,90.3 L777.2,93.6 V100 L771,103.3 L764.9,100 V93.6 Z" fill="#c8c8c8"/>
<path d="M764.9,93.6 L771,96.9 L777.2,93.6 M771,96.9 V103.3" fill="none" stroke="#2b2e32" stroke-width="1"/>
<path d="M788.8,94.5 L792.8,90.5 H801.8 V99.5 L797.8,103.5" fill="none" stroke="#c8c8c8" stroke-width="1.1"/><path d="M797.8,94.5 L801.8,90.5" stroke="#c8c8c8" stroke-width="1.1"/><rect x="788.8" y="94.5" width="9" height="9" fill="#c8c8c8" stroke="#c8c8c8" stroke-width="1.1"/>
<path d="M812.8,94.5 L816.8,90.5 H825.8 V99.5 L821.8,103.5" fill="none" stroke="#c8c8c8" stroke-width="1.1"/><path d="M821.8,94.5 L825.8,90.5" stroke="#c8c8c8" stroke-width="1.1"/><rect x="812.8" y="94.5" width="9" height="9" fill="none" stroke="#c8c8c8" stroke-width="1.1"/>
<path d="M850,94.5 L846,90.5 H837 V99.5 L841,103.5" fill="none" stroke="#c8c8c8" stroke-width="1.1"/>
<path d="M841,94.5 L837,90.5 V99.5 L841,103.5 Z" fill="#c8c8c8"/>
<rect x="841" y="94.5" width="9" height="9" fill="none" stroke="#c8c8c8" stroke-width="1.1"/>
<path d="M860.6,94.5 L864.6,90.5 H873.6 V99.5 L869.6,103.5" fill="none" stroke="#c8c8c8" stroke-width="1.1"/><path d="M869.6,94.5 L873.6,90.5" stroke="#c8c8c8" stroke-width="1.1"/><rect x="860.6" y="94.5" width="9" height="9" fill="none" stroke="#c8c8c8" stroke-width="1.1"/><path d="M869.6,94.5 L873.6,90.5 V99.5 L869.6,103.5 Z" fill="#c8c8c8"/>
</svg>
</body></html>
